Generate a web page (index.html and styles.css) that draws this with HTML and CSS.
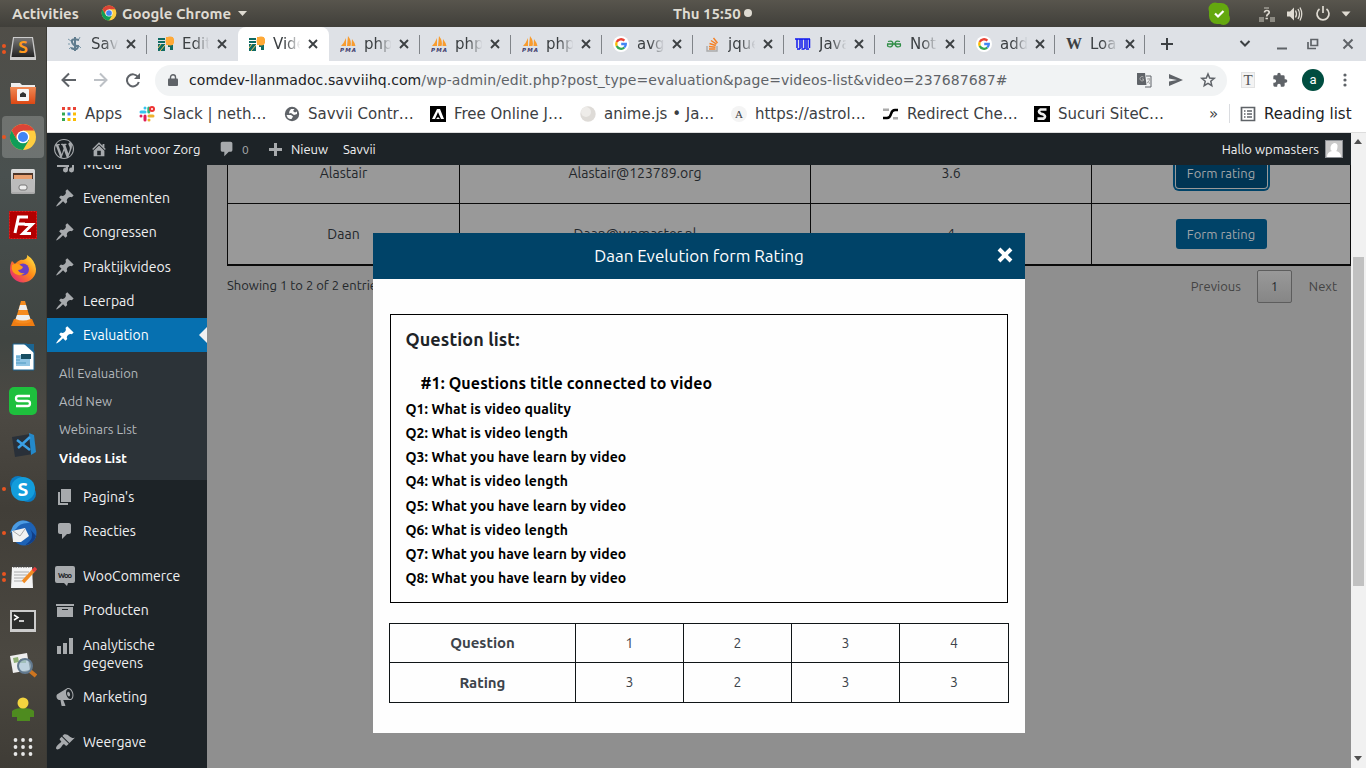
FILE: index.html
```html
<!DOCTYPE html>
<html lang="nl">
<head>
<meta charset="utf-8">
<title>Videos List</title>
<link rel="stylesheet" href="styles.css">
</head>
<body>
<svg class="defs" aria-hidden="true">
  <defs>
    <symbol id="x" viewBox="0 0 10 10"><path d="M1 1l8 8M9 1L1 9" stroke="#3c4043" stroke-width="1.9" fill="none"/></symbol>
    <symbol id="pin" viewBox="0 0 20 20"><path d="M10.44 3.02l1.82-1.82 6.36 6.35-1.83 1.82c-1.05-.68-2.48-.57-3.41.36l-.75.75c-.92.93-1.04 2.35-.35 3.41l-1.83 1.82-2.41-2.41-2.8 2.79c-.42.42-3.38 2.71-3.8 2.29s1.86-3.39 2.28-3.81l2.79-2.79L4.1 9.36l1.83-1.82c1.05.69 2.48.57 3.4-.36l.75-.75c.93-.92 1.05-2.35.36-3.41z"/></symbol>
    <symbol id="comment" viewBox="0 0 20 20"><path d="M5 2h9c1.1 0 2 .9 2 2v7c0 1.1-.9 2-2 2h-2l-5 5v-5H5c-1.1 0-2-.9-2-2V4c0-1.1.9-2 2-2z"/></symbol>
    <symbol id="google" viewBox="0 0 16 16"><circle cx="8" cy="8" r="8" fill="#fff"/><g fill="none" stroke-width="2.3"><path d="M11.4 4.6A4.8 4.8 0 0 0 3.7 6" stroke="#ea4335"/><path d="M3.7 6a4.8 4.8 0 0 0 0 4" stroke="#fbbc05"/><path d="M3.7 10a4.8 4.8 0 0 0 7.6 1.5" stroke="#34a853"/><path d="M11.3 11.5A4.6 4.6 0 0 0 12.8 8H8.2" stroke="#4285f4"/></g></symbol>
    <symbol id="pma" viewBox="0 0 16 16"><path d="M6 2v8H1Q4 7 6 2zM8 0q4 5 2.500 10H7zM12 3q3 4 3.500 7h-4z" fill="#f89c2f"/><text x="0" y="15.500" font-size="5.500" font-weight="700" font-style="italic" textLength="16" fill="#3c3a6c" font-family="DejaVu Sans">PMA</text></symbol>
    <symbol id="hart" viewBox="0 0 16 16"><path d="M0 2h7v2H0zM0 5h7v2H0zM0 8h7v7H0zM10 9h5v5h-3v-3h-2z" fill="#0f6b63"/><path d="M0 12l3-4M2 15l5-6" stroke="#f4c463"/><path d="M8 1h7v8H8z" fill="#ffa937"/><circle cx="12" cy="5" r="4.500" fill="#ffa937"/></symbol>
    <symbol id="chrome" viewBox="0 0 28 28"><circle cx="14" cy="14" r="13" fill="#ffcd40"/><path d="M14 14L2.700 7.500A13 13 0 0 1 25.300 7.500H14z" fill="#db4437"/><path d="M2.700 7.500A13 13 0 0 0 14 27l6-10-6-3-6 3z" fill="#0f9d58"/><path d="M14 7.500h11.300H8L2.700 7.500 8 17a6.800 6.800 0 0 1 6-9.500z" fill="#db4437"/><circle cx="14" cy="14" r="6.300" fill="#fff"/><circle cx="14" cy="14" r="5" fill="#4285f4"/></symbol>
    <linearGradient id="steel" x2="0" y2="1"><stop stop-color="#ddd"/><stop offset="1" stop-color="#a8a8a8"/></linearGradient>
    <linearGradient id="fire" x1="1" x2="0" y2="1"><stop stop-color="#fff44f"/><stop offset=".45" stop-color="#ff8b16"/><stop offset="1" stop-color="#e31587"/></linearGradient>
    <linearGradient id="orange" x2="0" y2="1"><stop stop-color="#f08a55"/><stop offset="1" stop-color="#dd4814"/></linearGradient>
    <linearGradient id="sub" x2="0" y2="1"><stop stop-color="#777"/><stop offset="1" stop-color="#222"/></linearGradient>
  </defs>
</svg>

<div class="topbar">
  <span class="activities">Activities</span>
  <svg class="tb-chrome" width="16" height="16"><use href="#chrome"/></svg>
  <span class="appname">Google Chrome</span>
  <svg class="tb-caret" width="9" height="5"><path d="M0 0h9L4.500 5z" fill="#dfdbd2"/></svg>
  <span class="clock">Thu 15:50</span><i class="dot"></i>
  <svg class="tray" width="150" height="27" viewBox="0 0 150 27">
    <rect x="5" y="3" width="20" height="21" rx="8" fill="#64a80f"/><circle cx="11" cy="9" r="6.500" fill="#64a80f"/><circle cx="19.500" cy="18.500" r="6.500" fill="#64a80f"/>
    <path d="M11 13.500l3 3 5.500-5.500" stroke="#fff" stroke-width="2.200" fill="none"/>
    <path d="M55 17h5v5h-5zM66 17h5v5h-5zM60 7h5v2h-5z" fill="#8b8981"/><path d="M60.500 12.500q.2-2 2.400-2 2.300 0 2.300 1.900 0 1-1.300 1.800-1.200.8-1.200 2.300M61.500 18.500h2.400" stroke="#dfdbd2" stroke-width="1.700" fill="none"/>
    <path d="M83 11.500h3l4-4v13l-4-4h-3z" fill="#dfdbd2"/><path d="M91.500 10.500q2 3.500 0 7M94 9q3 5 0 10M96 7.500q3.500 6.500 0 13" stroke="#dfdbd2" stroke-width="1.300" fill="none"/>
    <path d="M115.500 9a6 6 0 1 0 7 0M119 6v7" stroke="#dfdbd2" stroke-width="1.700" fill="none"/>
    <path d="M137.500 11.500h9l-4.500 5z" fill="#dfdbd2"/>
  </svg>
</div>

<div class="desk">
<nav class="dock">
  <div class="app two"><svg viewBox="0 0 28 28"><path d="M4 2h20l3 20v3H1v-3z" fill="#ccc"/><path d="M5 3h18l2.500 19h-23z" fill="url(#sub)"/><text x="14" y="18" text-anchor="middle" font-family="Ubuntu, Noto Sans" font-size="17" font-weight="700" fill="#ff9a1e">S</text></svg></div>
  <div class="app"><svg viewBox="0 0 28 28"><path d="M2 4h9l2 2h13v8H2z" fill="#eee"/><path d="M1 8h26l-1 17H2z" fill="url(#orange)"/><rect x="8" y="10" width="12" height="12" rx="1" fill="#f5f5f5"/><path d="M11 18v-3l3-2 3 2v3z" fill="#333"/></svg></div>
  <div class="app one current"><svg viewBox="0 0 28 28"><use href="#chrome"/></svg></div>
  <div class="app"><svg viewBox="0 0 28 28"><rect x="2" y="2" width="24" height="25" rx="1.500" fill="url(#steel)"/><path d="M4 6h20v6H4z" fill="#4e3528"/><path d="M5 8h18v4H5z" fill="#e8a070"/><path d="M3 12h22v13H3z" fill="#bbb"/><rect x="10" y="18" width="8" height="5" rx="2" fill="#eee" stroke="#777"/></svg></div>
  <div class="app"><svg viewBox="0 0 28 28"><path d="M0 0h28v28H0z" fill="#b30000"/><path d="M.5.5h27v27H.5z" fill="none" stroke="#d22" stroke-dasharray="2 1"/><path d="M6 22L9.500 6H19M8 13h8M15.500 13.500H23l-9 9h8" stroke="#fff" stroke-width="3" fill="none"/></svg></div>
  <div class="app"><svg viewBox="0 0 28 28"><path d="M3 6l3 3q5-5 8-4 5-1 4-5 8 5 9 14a13 13 0 0 1-26 1Q1 9 3 6z" fill="url(#fire)"/><circle cx="14" cy="14.500" r="6" fill="#6a3fc4"/><path d="M3 10q5-3 8 0l3 2q-1 3-5 3 2 4 7 3-7 5-12-1-2-3-1-7z" fill="#ff9d18"/></svg></div>
  <div class="app"><svg viewBox="0 0 28 28"><path d="M5 20h18l3 7H2z" fill="#ef7d12"/><path d="M12 2h4l6 21q-8 3-16 0z" fill="#f68b1e"/><path d="M11 6h6l1.500 5h-9zM8 16h12l1.500 4q-7.500 3-15 0z" fill="#eee"/></svg></div>
  <div class="app"><svg viewBox="0 0 28 28"><path d="M4 1h14l7 7v19H4z" fill="#fff" stroke="#1b6592"/><path d="M15 1h10v9z" fill="#1b6592"/><path d="M7 12h14v11H7z" fill="#91c5e4"/><path d="M12 11h10v5H12z" fill="#174e63"/><path d="M7 14h4M7 17h4M7 20h10" stroke="#4e9ac2"/></svg></div>
  <div class="app"><svg viewBox="0 0 28 28"><rect width="28" height="28" rx="5" fill="#1ec03d"/><path d="M21 9H9.500Q7 9 7 11.500T9.500 14h9q2.500 0 2.500 2.500T18.500 19H7" fill="none" stroke="#fff" stroke-width="2.300"/></svg></div>
  <div class="app"><svg viewBox="0 0 28 28"><path d="M3 6l18-3 3 20-18 3z" fill="#293039"/><path d="M20 2l5 2 2 17-5 3z" fill="#2489ca"/><path d="M21 6L9 17M8 9l13 10" stroke="#3aa0e5" stroke-width="2.500"/></svg></div>
  <div class="app one"><svg viewBox="0 0 28 28"><circle cx="9" cy="9" r="8" fill="#0b7bc1"/><circle cx="19" cy="19" r="8" fill="#0b7bc1"/><circle cx="14" cy="14" r="12" fill="#139ddc"/><text x="14" y="20.500" text-anchor="middle" font-family="Ubuntu, Noto Sans" font-size="19" font-weight="700" fill="#fff">S</text></svg></div>
  <div class="app one"><svg viewBox="0 0 28 28"><circle cx="15" cy="14" r="12.500" fill="#1d62b5"/><path d="M4 7q8-9 17-3-10-1-14 6l-6 4z" fill="#4b9be2"/><path d="M3 12l13-3 4 8-8 6H4z" fill="#f2f2f2"/><path d="M4 12l7 5 5-7" fill="none" stroke="#aaa"/><path d="M21 10q6 9-5 16 9-1 11-9z" fill="#123f87"/></svg></div>
  <div class="app two"><svg viewBox="0 0 28 28"><path d="M3 4h20l1 21H2z" fill="#f4f4f4"/><path d="M4 3h18" stroke="#444" stroke-width="3" stroke-dasharray="1.500 1"/><path d="M5 9h15M5 12h13M5 15h14M5 18h8" stroke="#aaa"/><path d="M25 7L14 19" stroke="#f08b24" stroke-width="3.500"/><path d="M24 8l3-3" stroke="#e43b3b" stroke-width="3.500"/></svg></div>
  <div class="app"><svg viewBox="0 0 28 28"><path d="M1 3h26v22H1z" fill="#ccc"/><path d="M3 5h22v17H3z" fill="#2d2e2d"/><path d="M5 8l4 2.500L5 13M10 14h5" fill="none" stroke="#fff" stroke-width="1.500"/></svg></div>
  <div class="app"><svg viewBox="0 0 28 28"><path d="M1 5l17-3 3 17-17 3z" fill="#eee"/><path d="M4 7l5-1 1 5-5 1zM11 8h6v4h-6z" fill="#8faf75"/><path d="M21 20l6 5" stroke="#cd7520" stroke-width="4"/><circle cx="16" cy="15" r="7" fill="#a9c6d7" fill-opacity=".7" stroke="#62798f" stroke-width="2"/></svg></div>
  <div class="app"><svg viewBox="0 0 28 28"><path d="M3 16q3-3 11-3t11 3v6h-4v4H8v-4H3z" fill="#4e8b1f"/><circle cx="14" cy="8" r="5.500" fill="#f3d43f"/></svg></div>
  <div class="app grid"><svg viewBox="0 0 28 28"><g fill="#e8e8e8"><circle cx="6.500" cy="6" r="1.900"/><circle cx="14" cy="6" r="1.900"/><circle cx="21.500" cy="6" r="1.900"/><circle cx="6.500" cy="13" r="1.900"/><circle cx="14" cy="13" r="1.900"/><circle cx="21.500" cy="13" r="1.900"/><circle cx="6.500" cy="20" r="1.900"/><circle cx="14" cy="20" r="1.900"/><circle cx="21.500" cy="20" r="1.900"/></g></svg></div>
</nav>

<div class="browser">
  <div class="tabs">
    <div class="tab"><svg viewBox="0 0 16 16"><path d="M12 4Q4 2 5 6t6 4q0 5-7 2M8 1v14" fill="none" stroke="#607c8e" stroke-width="2"/><path d="M1 3l3 2M13 1l-1 2M2 13l2-2M14 12l-2-2M1 8h2" stroke="#7b98a9"/></svg><span>Sav</span><svg class="tx"><use href="#x"/></svg></div>
    <div class="tab nosep"><svg><use href="#hart"/></svg><span>Edit</span><svg class="tx"><use href="#x"/></svg></div>
    <div class="tab active"><svg><use href="#hart"/></svg><span>Vide</span><svg class="tx"><use href="#x"/></svg></div>
    <div class="tab"><svg><use href="#pma"/></svg><span>php</span><svg class="tx"><use href="#x"/></svg></div>
    <div class="tab"><svg><use href="#pma"/></svg><span>php</span><svg class="tx"><use href="#x"/></svg></div>
    <div class="tab"><svg><use href="#pma"/></svg><span>php</span><svg class="tx"><use href="#x"/></svg></div>
    <div class="tab"><svg><use href="#google"/></svg><span>avg</span><svg class="tx"><use href="#x"/></svg></div>
    <div class="tab"><svg viewBox="0 0 16 16"><path d="M3 10v5h10v-5" fill="none" stroke="#aaa" stroke-width="1.400"/><path d="M5 13h6.500M5 10.500l6.500.7M5.500 7.500l6.300 2M7 4.500l5.500 3.700M9.500 2l4 5" stroke="#f48024" stroke-width="1.400"/></svg><span>jque</span><svg class="tx"><use href="#x"/></svg></div>
    <div class="tab"><svg viewBox="0 0 16 16"><path d="M0 3h15M2 13h3M6.500 13h3M11 13h3M2 3v9M5 3v10M7 3v9M10 3v10M12 3v9M14.500 3v9" stroke="#1019ee" stroke-width="1.500"/></svg><span>Java</span><svg class="tx"><use href="#x"/></svg></div>
    <div class="tab late"><svg viewBox="0 0 16 16"><path d="M1 8h14M2 5.500q5-1.500 5 2.500-1 4-5 2.500-1-2 0-2.500M14 5.500Q9 4 9 8q1 4 5 2.500 1-2 0-2.500" fill="none" stroke="#2f8d46" stroke-width="1.300"/></svg><span>Not</span><svg class="tx"><use href="#x"/></svg></div>
    <div class="tab late"><svg><use href="#google"/></svg><span>add</span><svg class="tx"><use href="#x"/></svg></div>
    <div class="tab late"><b class="wiki">W</b><span>Loa</span><svg class="tx"><use href="#x"/></svg></div>
    <svg class="newtab" viewBox="0 0 12 12"><path d="M6 0v12M0 6h12" stroke="#3c4043" stroke-width="2"/></svg>
    <svg class="winbtns" width="120" height="34" viewBox="0 0 120 34"><g fill="none" stroke="#3c4043" stroke-width="2"><path d="M9.500 14l4.500 4.500 4.500-4.500"/><path d="M46 21.500h10" stroke="#5f6368"/><path d="M80 12.500h6.500v6H80zM77 15v6.500h8" stroke="#5f6368" stroke-width="1.700"/><path d="M112.500 12.500l9 9M121.500 12.500l-9 9" stroke="#5f6368"/></g></svg>
  </div>
  <div class="toolbar">
    <svg class="nav" width="90" height="38" viewBox="0 0 90 38"><g fill="none" stroke-width="2"><path d="M29 19H16M22 12.500L15.500 19l6.500 6.500" stroke="#5f6368"/><path d="M47 19h13M53 12.500l6.500 6.500-6.500 6.500" stroke="#bdc1c6"/></g></svg>
    <svg class="reload" width="16" height="16" viewBox="0 0 16 16"><path d="M13 5a6 6 0 1 0 .8 5" fill="none" stroke="#5f6368" stroke-width="2"/><path d="M15 1v6H9z" fill="#5f6368"/></svg>
    <div class="omni">
      <svg width="10" height="12" viewBox="0 0 10 12"><path d="M1 4.500h8q1 0 1 1V11q0 1-1 1H1q-1 0-1-1V5.500q0-1 1-1z" fill="#5f6368"/><path d="M2.500 5V3.300a2.500 2.500 0 0 1 5 0V5" fill="none" stroke="#5f6368" stroke-width="1.400"/></svg>
      <span class="url"><em>comdev-llanmadoc.savviihq.com</em>/wp-admin/edit.php?post_type=evaluation&amp;page=videos-list&amp;video=237687687#</span>
      <svg class="omni-icons" width="84" height="18" viewBox="0 0 84 18"><path d="M1 2h8l1.500 12H2q-1 0-1-1z" fill="#5f6368"/><path d="M10 5h5v11H9" fill="none" stroke="#5f6368"/><path d="M7.500 6a2.200 2.200 0 1 0 0 3.500V8H6M11 8h4M13 7v1M14 8q-1 3-3 4M12 10l2 3" stroke="#aaa" fill="none"/><path d="M33 3l14 6-14 6v-4.600L41 9l-8-1.400z" fill="#5f6368"/><path d="M72 3l1.700 4.100 4.500.3-3.400 2.900 1 4.300-3.800-2.300-3.800 2.300 1-4.300-3.400-2.900 4.500-.3z" fill="none" stroke="#5f6368" stroke-width="1.500"/></svg>
    </div>
    <span class="text-ext">T</span>
    <svg class="puzzle" width="16" height="16" viewBox="0 0 24 24"><path d="M20.500 11H19V7a2 2 0 0 0-2-2h-4V3.500a2.500 2.500 0 0 0-5 0V5H4a2 2 0 0 0-2 2v3.800h1.500a2.700 2.700 0 0 1 0 5.400H2V20a2 2 0 0 0 2 2h3.800v-1.500a2.700 2.700 0 0 1 5.400 0V22H17a2 2 0 0 0 2-2v-4h1.500a2.500 2.500 0 0 0 0-5z" fill="#5f6368"/></svg>
    <span class="avatar">a</span>
    <svg class="kebab" width="4" height="14"><circle cx="2" cy="2" r="1.600"/><circle cx="2" cy="7" r="1.600"/><circle cx="2" cy="12" r="1.600"/></svg>
  </div>
  <div class="bookmarks">
    <div class="bm"><svg viewBox="0 0 16 16"><path d="M1 1h3v3H1zM6.500 1h3v3h-3zM12 1h3v3h-3z" fill="#ea4335"/><path d="M1 6.500h3v3H1z" fill="#34a853"/><path d="M6.500 6.500h3v3h-3z" fill="#4285f4"/><path d="M12 6.500h3v3h-3z" fill="#fbbc05"/><path d="M1 12h3v3H1z" fill="#34a853"/><path d="M6.500 12h3v3h-3zM12 12h3v3h-3z" fill="#fbbc05"/></svg><span class="w1">Apps</span></div>
    <div class="bm"><svg viewBox="0 0 16 16"><g fill="none" stroke-width="3" stroke-linecap="round"><path d="M6 2v0M2 6h4" stroke="#36c5f0"/><path d="M9.800 2v4" stroke="#2eb67d"/><path d="M10 10h4M10 14v0" stroke="#ecb22e"/><path d="M6 10v4M2 10v0" stroke="#e01e5a"/></g><circle cx="13" cy="3" r="3" fill="#e33"/><circle cx="13" cy="3" r="1" fill="#fff"/></svg><span class="w2">Slack | neth…</span></div>
    <div class="bm"><svg viewBox="0 0 16 16"><circle cx="8" cy="8" r="7.200" fill="#5f6368"/><path d="M2.500 9H7l2 1.500L7.500 13H6Q3 12 2.500 9zM7 3h3.500L9 5l2 1.500 2-1V8l-3 1-3-2-2 .5L5.500 5z" fill="#fff"/></svg><span class="w3">Savvii Contr…</span></div>
    <div class="bm"><svg viewBox="0 0 16 16"><path d="M0 0h16v16H0z"/><path d="M2 13L7 3h3l4 10h-3L8 6l-3 7z" fill="#fff"/><path d="M6 13l2-2 2 2z" fill="#fff"/></svg><span class="w4">Free Online J…</span></div>
    <div class="bm"><svg viewBox="0 0 16 16"><circle cx="8" cy="8" r="7.700" fill="#dedbd7"/><circle cx="6" cy="6" r="5" fill="#eeece9"/></svg><span class="w5">anime.js • Ja…</span></div>
    <div class="bm"><b class="astro">A</b><span class="w6">https://astrol…</span></div>
    <div class="bm"><svg viewBox="0 0 16 16"><path d="M0 12h4q3 0 4-4t4-4h3" fill="none" stroke="#000" stroke-width="2.500"/><path d="M0 2.500h6V5H0zM10 11h5v2.500h-5z" fill="#aaa"/></svg><span class="w7">Redirect Che…</span></div>
    <div class="bm"><svg viewBox="0 0 16 16"><path d="M0 0h16v16H0z"/><path d="M12.500 3.500H6.500q-3 2 0 4l3 1q3 2 0 4.200H3.500" fill="none" stroke="#eee" stroke-width="2.700"/></svg><span class="w8">Sucuri SiteC…</span></div>
    <span class="more">»</span>
    <div class="reading"><svg viewBox="0 0 16 16"><path d="M1.500 1.500h13v13h-13z" fill="none" stroke="#5f6368" stroke-width="1.700"/><path d="M4 5h1.500M7 5h5M4 8h1.500M7 8h5M4 11h1.500M7 11h5" stroke="#5f6368" stroke-width="1.500"/></svg><span>Reading list</span></div>
  </div>

  <div class="view">
    <div class="page">
      <header class="adminbar">
        <svg class="wp" viewBox="0 0 20 20"><path d="M20 10c0-5.510-4.490-10-10-10C4.480 0 0 4.490 0 10c0 5.520 4.480 10 10 10 5.510 0 10-4.480 10-10zM7.780 15.370L4.370 6.220c.55-.02 1.170-.08 1.170-.08.5-.06.44-1.130-.06-1.110 0 0-1.450.11-2.370.11-.18 0-.37 0-.58-.01C4.120 2.690 6.870 1.110 10 1.110c2.330 0 4.450.87 6.050 2.340-.68-.11-1.650.39-1.650 1.580 0 .74.45 1.360.9 2.100.35.61.55 1.360.55 2.460 0 1.490-1.400 5-1.400 5l-3.030-8.370c.54-.02.82-.17.82-.17.5-.05.44-1.250-.06-1.220 0 0-1.440.12-2.380.12-.87 0-2.330-.12-2.330-.12-.5-.03-.56 1.200-.06 1.220l.92.08 1.260 3.410zM17.410 10c.24-.64.74-1.870.43-4.250.7 1.290 1.050 2.710 1.050 4.250 0 3.290-1.730 6.240-4.400 7.780.97-2.590 1.940-5.200 2.920-7.780zM6.100 18.090C3.120 16.650 1.110 13.530 1.110 10c0-1.300.23-2.480.72-3.590C3.250 10.300 4.670 14.200 6.100 18.090zm4.030-6.630l2.580 6.980c-.86.29-1.760.45-2.710.45-.79 0-1.570-.11-2.290-.33.81-2.380 1.620-4.740 2.420-7.100z"/></svg>
        <svg class="home" viewBox="0 0 20 20"><path d="M16 8.500l1.530 1.530-1.060 1.060L10 4.600l-6.470 6.490-1.060-1.060L10 2.500l4 4v-2h2v4zm-6-2.460l6 5.990V18H4v-5.970zM12 17v-5H8v5h4z"/></svg>
        <span class="site">Hart voor Zorg</span>
        <svg class="bubble"><use href="#comment"/></svg><span class="zero">0</span>
        <svg class="plus" viewBox="0 0 13 13"><path d="M5 0h3v5h5v3H8v5H5V8H0V5h5z"/></svg>
        <span class="new">Nieuw</span><span class="sav">Savvii</span>
        <span class="hello">Hallo wpmasters</span>
        <svg class="me" viewBox="0 0 18 18"><path d="M0 0h18v18H0z" fill="#8c8f94"/><path d="M1 1h16v16H1z" fill="#c9c9c9"/><path d="M9 3q4 0 3.500 4T11 11q5 1 5 6H2q0-5 5-6-2-1-1.500-4T9 3z" fill="#fff"/></svg>
      </header>
      <div class="cols">
        <nav class="menu">
          <a class="mi media"><svg viewBox="0 0 20 20"><path d="M8 3h9v2H8zM2 11h12v2H2zM11 11h2v5a2.500 2.500 0 1 1-2-2.400zM17 6h2v10a2.500 2.500 0 1 1-2-2.400z"/></svg><span>Media</span></a>
          <a class="mi"><svg><use href="#pin"/></svg><span>Evenementen</span></a>
          <a class="mi"><svg><use href="#pin"/></svg><span>Congressen</span></a>
          <a class="mi"><svg><use href="#pin"/></svg><span>Praktijkvideos</span></a>
          <a class="mi"><svg><use href="#pin"/></svg><span>Leerpad</span></a>
          <a class="mi open"><svg><use href="#pin"/></svg><span>Evaluation</span></a>
          <div class="sub"><a>All Evaluation</a><a>Add New</a><a>Webinars List</a><a class="here">Videos List</a></div>
          <a class="mi"><svg viewBox="0 0 20 20"><path d="M6 15V2h10v13H6zm-1 1h8v2H3V5h2v11z"/></svg><span>Pagina's</span></a>
          <a class="mi gap"><svg><use href="#comment"/></svg><span>Reacties</span></a>
          <a class="mi"><svg viewBox="0 0 20 20"><path d="M2 0h16q2 0 2 2v13q0 2-2 2h-5l-1 3-3-3H2q-2 0-2-2V2q0-2 2-2z"/><text x="3" y="11.500" font-size="7.500" font-weight="700" textLength="14" fill="#1d2327">Woo</text></svg><span>WooCommerce</span></a>
          <a class="mi"><svg viewBox="0 0 20 20"><path d="M19 4v2H1V4h18zM2 7h16v10H2V7zm11 3V9H7v1h6z"/></svg><span>Producten</span></a>
          <a class="mi tall"><svg viewBox="0 0 20 20"><path d="M18 18V2h-4v16h4zm-6 0V7H8v11h4zm-6 0v-8H2v8h4z"/></svg><span>Analytische gegevens</span></a>
          <a class="mi gap"><svg viewBox="0 0 20 20"><path fill-rule="evenodd" d="M18.150 5.940c.46 1.620.38 3.220-.02 4.480-.42 1.280-1.260 2.180-2.300 2.480-.16.06-.26.06-.4.06-.06.02-.12.02-.18.02-.06.02-.14.02-.22.02h-6.800l2.220 5.500c.02.14-.06.26-.14.34-.08.1-.24.16-.34.16H6.950c-.1 0-.26-.06-.34-.16-.08-.08-.16-.2-.14-.34l-1-5.500H4.250l-.02-.02c-.5.06-1.080-.18-1.540-.62s-.88-1.080-1.060-1.880c-.24-.8-.2-1.560-.02-2.200.18-.62.58-1.080 1.060-1.300l.02-.02 9-5.400c.1-.06.18-.1.24-.16.06-.04.14-.08.24-.12.16-.08.28-.12.5-.18 1.040-.3 2.240.1 3.220.98s1.840 2.240 2.260 3.860zm-2.580 5.980h-.02c.4-.1.74-.34 1.040-.7.58-.7.86-1.760.86-3.040 0-.64-.1-1.300-.28-1.980-.34-1.360-1.020-2.500-1.780-3.240s-1.680-1.100-2.460-.88c-.82.22-1.400.96-1.700 2-.32 1.040-.28 2.360.06 3.720.38 1.360 1 2.500 1.800 3.240.78.74 1.620 1.100 2.480.88zm-2.540-7.080c.22-.04.42-.02.62.04.38.16.76.48 1.020 1s.42 1.200.42 1.780c0 .3-.04.56-.12.8-.18.48-.44.84-.86.94-.34.1-.8-.06-1.140-.4s-.64-.86-.78-1.500c-.18-.62-.12-1.240.02-1.720s.48-.84.82-.94z"/></svg><span>Marketing</span></a>
          <a class="mi"><svg viewBox="0 0 20 20"><path d="M14.480 11.060L7.410 3.990l1.500-1.500c.5-.56 2.300-.47 3.510.32 1.210.8 1.430 1.280 2.910 2.100 1.180.64 2.450 1.260 4.450.85zm-.71.71L6.700 4.700 4.930 6.470c-.39.39-.39 1.020 0 1.410l1.060 1.060c.39.39.39 1.030 0 1.420-.6.6-1.430 1.110-2.210 1.690-.35.26-.7.53-1.010.84C1.430 14.230.4 16.080 1.400 17.070c.99 1 2.840-.03 4.180-1.360.31-.31.58-.66.85-1.020.57-.78 1.080-1.610 1.690-2.210.39-.39 1.020-.39 1.410 0l1.060 1.060c.39.39 1.020.39 1.410 0z"/></svg><span>Weergave</span></a>
        </nav>
        <main class="content">
          <div class="grid-table">
            <div>Alastair</div><div>Alastair@123789.org</div><div>3.6</div><div><button class="btn focus">Form rating</button></div>
            <div>Daan</div><div>Daan@wpmaster.nl</div><div>4</div><div><button class="btn">Form rating</button></div>
          </div>
          <div class="below"><span class="info">Showing 1 to 2 of 2 entries</span><span class="pg">Previous</span><span class="num">1</span><span class="pg">Next</span></div>
        </main>
      </div>
      <section class="modal">
        <header><h2>Daan Evelution form Rating</h2><svg class="close" viewBox="0 0 16 16"><path d="M2 2l12 12M14 2L2 14" stroke="#fff" stroke-width="4"/></svg></header>
        <div class="questions">
          <h3>Question list:</h3>
          <h4>#1: Questions title connected to video</h4>
          <p>Q1: What is video quality</p>
          <p>Q2: What is video length</p>
          <p>Q3: What you have learn by video</p>
          <p>Q4: What is video length</p>
          <p>Q5: What you have learn by video</p>
          <p>Q6: What is video length</p>
          <p>Q7: What you have learn by video</p>
          <p>Q8: What you have learn by video</p>
        </div>
        <div class="ratings">
          <b>Question</b><span>1</span><span>2</span><span>3</span><span>4</span>
          <b>Rating</b><span>3</span><span>2</span><span>3</span><span>3</span>
        </div>
      </section>
    </div>
    <div class="scroll"><svg width="8" height="5"><path d="M0 5l4-5 4 5z" fill="#505050"/></svg><i></i><svg class="dn" width="8" height="5"><path d="M0 0l4 5 4-5z" fill="#505050"/></svg></div>
  </div>
</div>
</div>
</body>
</html>
```

FILE: styles.css
```css
* { box-sizing: border-box; }
body { margin: 0; width: 1366px; height: 768px; overflow: hidden; font-family: Ubuntu, "Noto Sans", sans-serif; background: #45443f; }
svg { display: block; flex: none; }
.defs { position: absolute; width: 0; height: 0; }
h2, h3, h4, p { margin: 0; }

.topbar { height: 27px; display: flex; align-items: center; padding: 0 0 1px 12px; background: linear-gradient(#58554d, #403f3a); color: #dfdbd2; font-size: 15px; font-weight: 700; white-space: nowrap; }
.activities { width: 89px; }
.appname { margin-left: 5px; width: 112px; }
.tb-caret { margin-left: 4px; }
.clock { margin-left: 426px; width: 68px; }
.dot { width: 8px; height: 8px; border-radius: 50%; background: #dfdbd2; margin-left: 3px; }
.tray { margin-left: auto; margin-right: 12px; }

.desk { display: flex; height: 741px; }
.dock { width: 47px; display: flex; flex-direction: column; background: linear-gradient(#504e48, #49504f 20%, #404542 42%, #4c4943 52%, #413e38 65%, #4b4841 85%, #3f3c36); border-right: 1px solid #3c3b36; }
.app { height: 44px; display: flex; align-items: center; padding-left: 9px; position: relative; }
.app svg { width: 28px; height: 28px; }
.app.grid { height: 34px; }
.current::before { content: ""; position: absolute; left: 2px; top: 1px; width: 42px; height: 42px; border-radius: 4px; background: rgba(255,255,255,.2); }
.current svg { position: relative; }
.one::after, .two::after { content: ""; position: absolute; left: 2px; top: 20px; width: 4px; height: 4px; border-radius: 50%; background: #e95420; }
.two::after { top: 17px; box-shadow: 0 6px #e95420; }

.browser { width: 1319px; display: flex; flex-direction: column; font-family: "DejaVu Sans", sans-serif; }
.tabs { height: 34px; display: flex; align-items: center; background: #dee1e6; padding-left: 9px; }
.tab { width: 91px; flex: none; height: 34px; display: flex; align-items: center; padding-left: 11px; position: relative; font: 16.670px "DejaVu Sans Condensed", "DejaVu Sans", sans-serif; color: #3c4043; }
.tab.late { width: 90px; }
.tab svg { width: 16px; height: 16px; }
.tab span { width: 28px; margin: 0 7px 0 8px; padding-bottom: 2px; white-space: nowrap; -webkit-mask-image: linear-gradient(90deg, #000 45%, transparent 98%); mask-image: linear-gradient(90deg, #000 45%, transparent 98%); }
.tab .tx { width: 10px; height: 10px; }
.tab::after { content: ""; position: absolute; right: 0; top: 8px; width: 1px; height: 19px; background: #808489; }
.tab.nosep::after, .tab.active::after { display: none; }
.tab.active { background: #fff; border-radius: 8px 8px 0 0; }
.wiki { width: 16px; font: 700 16px "Liberation Serif", serif; }
.newtab { width: 12px; height: 12px; margin-left: 16px; }
.winbtns { margin-left: 58px; overflow: visible; }

.toolbar { height: 38px; background: #fff; display: flex; align-items: center; }
.nav { width: 90px; margin-right: -11px; }
.reload { margin-left: -1px; }
.omni { margin-left: 14px; width: 1072px; height: 31px; border-radius: 16px; background: #f1f3f4; display: flex; align-items: center; padding-left: 13px; flex: none; }
.url { margin-left: 11px; font-size: 14px; color: #5f6368; white-space: nowrap; letter-spacing: .09px; }
.url em { font-style: normal; color: #202124; }
.omni-icons { margin-left: auto; margin-right: 7px; }
.text-ext { margin-left: 14px; width: 14px; height: 16px; background: #f3f3f3; border: 1px solid #e2e2e2; font: 15px/14px "Liberation Serif", serif; color: #555; text-align: center; }
.puzzle { margin-left: 17px; }
.avatar { margin-left: 14px; width: 22px; height: 22px; border-radius: 50%; background: #004d40; color: #fff; font: 13px/21px Roboto, sans-serif; text-align: center; }
.kebab { margin-left: 19px; fill: #5f6368; }

.bookmarks { height: 33px; background: #fff; display: flex; align-items: center; padding: 0 0 4px 14px; font: 16.670px "DejaVu Sans Condensed", "DejaVu Sans", sans-serif; color: #3c4043; white-space: nowrap; }
.bm { display: flex; align-items: center; }
.bm svg, .reading svg { width: 16px; height: 16px; margin-right: 8px; }
.w1 { width: 54px; } .w2 { width: 121px; } .w3 { width: 122px; } .w4 { width: 126px; }
.w5 { width: 127px; } .w6 { width: 128px; } .w7 { width: 127px; } .w8 { width: 140px; }
.astro { width: 16px; height: 16px; margin-right: 8px; border-radius: 50%; background: #f4f4f4; font: 11px/16px "Liberation Serif", serif; text-align: center; }
.more { width: 20px; margin-left: 11px; }
.reading { display: flex; align-items: center; border-left: 1px solid #dadce0; padding-left: 10px; color: #202124; }

.view { height: 636px; display: flex; border-top: 1px solid #ddd; }
.page { width: 1304px; height: 635px; position: relative; overflow: hidden; font-family: Ubuntu, "Noto Sans", sans-serif; }
.adminbar { height: 32px; background: #1d2327; color: #f0f0f1; display: flex; align-items: center; padding-left: 7px; font-size: 13px; white-space: nowrap; }
.adminbar svg { fill: #a7aaad; }
.wp { width: 20px; height: 20px; }
.home { width: 18px; height: 18px; margin-left: 16px; }
.site { margin-left: 7px; width: 103px; }
.bubble { width: 18px; height: 18px; }
.zero { margin-left: 6px; width: 27px; color: #a7aaad; font-size: 12px; }
.plus { width: 13px; height: 13px; }
.new { margin-left: 9px; width: 52px; }
.hello { margin-left: auto; margin-right: 6px; }
.me { width: 18px; height: 18px; margin-right: 8px; }
.cols { display: flex; height: 603px; overflow: hidden; }
.menu { width: 160px; flex: none; background: #1d2327; }
.mi { display: flex; align-items: center; height: 34.250px; padding-left: 8px; color: #f0f0f1; font-size: 14px; line-height: 18px; position: relative; }
.mi svg { width: 20px; height: 20px; margin-right: 8px; fill: #a7aaad; }
.media { margin-top: -18.250px; }
.sub ~ .mi { height: 34px; }
.sub ~ .tall { height: 53px; align-items: flex-start; padding-top: 9px; }
.gap { margin-bottom: 11px; }
.mi.open { background: #0670b0; color: #fff; }
.mi.open svg { fill: #fff; }
.open::after { content: ""; position: absolute; right: 0; top: 9px; border: 8px solid transparent; border-left: 0; border-right-color: #f0f0f1; }
.sub { height: 128px; background: #2c3338; padding: 7px 0 0 12px; font-size: 13px; color: #b3b7bb; line-height: 28px; }
.sub a { display: block; }
.sub .here { color: #fff; font-weight: 600; margin-top: 1px; }

.content { flex: 1; padding-left: 20px; background: #8f8f8f; overflow: hidden; color: #23272b; }
.grid-table { margin-top: -23px; display: grid; grid-template-columns: 232px 351px 281px 259px; grid-auto-rows: 61px; border-left: 1px solid #0a0a0a; border-bottom: 2px solid #0a0a0a; background: #999; font-size: 14px; width: 1124px; }
.grid-table > div { display: flex; align-items: center; justify-content: center; border-right: 1px solid #0a0a0a; border-top: 1px solid #0a0a0a; }
.btn { width: 91px; height: 30px; border: 0; border-radius: 3px; background: #004368; color: #a0a5a8; font: 13px Ubuntu, "Noto Sans", sans-serif; padding: 0 0 1px; }
.btn.focus { background: #003554; box-shadow: 0 0 0 1px #999, 0 0 0 3px #004368; }
.below { display: flex; align-items: flex-start; font-size: 13px; height: 40px; padding: 4px 14px 0 0; line-height: 33px; }
.info { flex: 1; line-height: 31px; }
.pg { color: #434343; }
.num { width: 35px; height: 33px; line-height: 31px; text-align: center; margin: 0 17px 0 16px; border: 1px solid #5d5d5d; border-radius: 2px; background: linear-gradient(#999, #868686); }

.modal { position: absolute; left: 326px; top: 100px; width: 652px; height: 500px; background: #fefefe; color: #1d2327; padding: 0 16px; }
.modal header { height: 46px; margin: 0 -16px 35px; background: #004368; display: flex; align-items: center; justify-content: center; position: relative; }
.modal h2 { color: #fff; font-size: 17px; font-weight: 400; padding-bottom: 2px; }
.close { position: absolute; right: 12px; top: 14px; width: 16px; height: 16px; }
.questions { margin: 0 1px 20px; height: 289px; border: 1px solid #000; padding: 11px 14.500px; }
.questions h3 { font-size: 18px; line-height: 27px; font-weight: 600; letter-spacing: .08px; }
.questions h4 { margin: 18px 0 2px 15px; font-size: 16px; line-height: 24px; font-weight: 600; color: #000; letter-spacing: .1px; }
.questions p { font-size: 14px; font-weight: 700; line-height: 24.120px; color: #000; letter-spacing: .09px; }
.ratings { display: grid; grid-template-columns: 186px 108px 108px 108px 109px; grid-template-rows: 39px 40px; width: 620px; border-left: 1px solid #101517; border-bottom: 1px solid #101517; font-size: 14px; color: #3c434a; }
.ratings > * { border-top: 1px solid #101517; border-right: 1px solid #101517; display: flex; align-items: center; justify-content: center; padding-bottom: 1px; }
.ratings b { font-size: 15px; }

.scroll { width: 15px; background: #f1f1f1; padding: 6px 2px 7px; display: flex; flex-direction: column; }
.scroll svg { margin-left: 1px; }
.scroll i { display: block; width: 11px; height: 329px; background: #c1c1c1; margin-top: 113px; }
.scroll .dn { margin-top: auto; }
```
